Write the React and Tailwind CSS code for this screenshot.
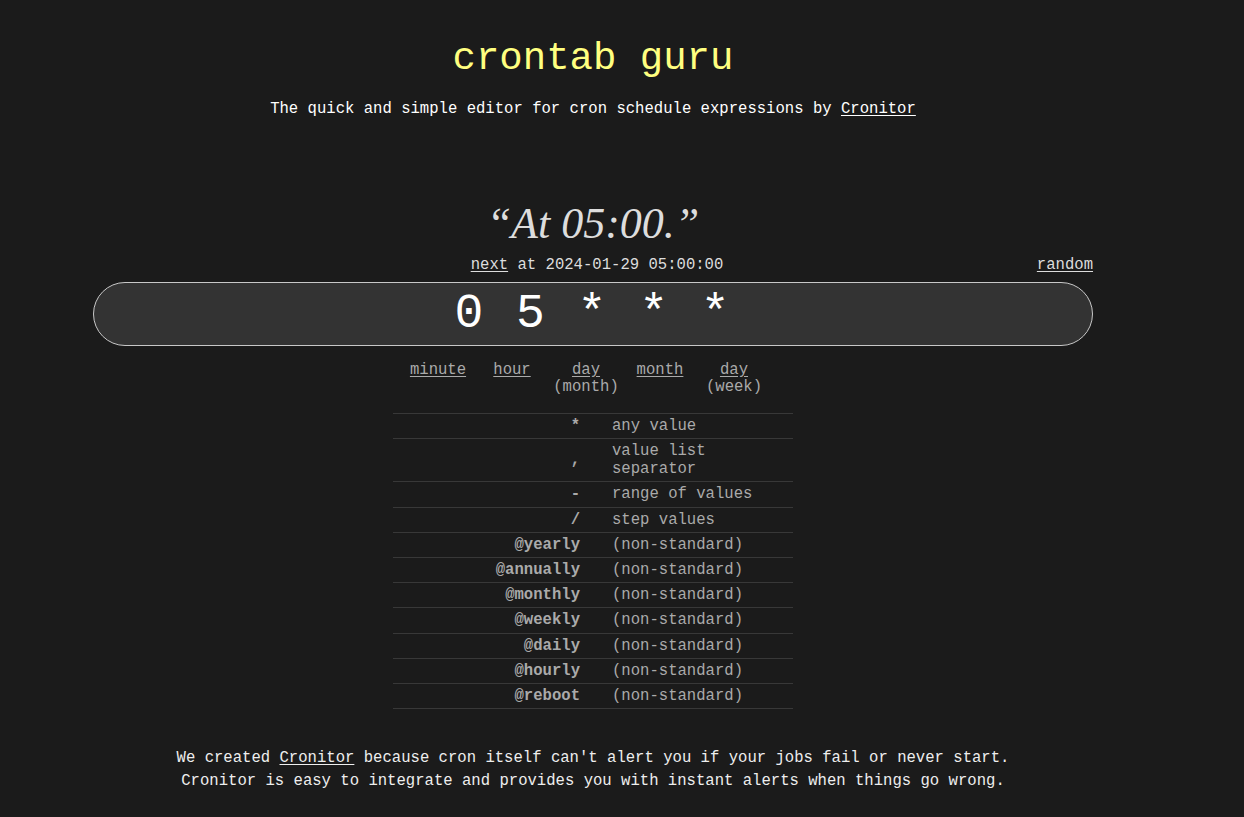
const rows = [
  { k: '*', v: 'any value' },
  { k: ',', v: <>value list<br />separator</> },
  { k: '-', v: 'range of values' },
  { k: '/', v: 'step values' },
  { k: '@yearly', v: '(non-standard)' },
  { k: '@annually', v: '(non-standard)' },
  { k: '@monthly', v: '(non-standard)' },
  { k: '@weekly', v: '(non-standard)' },
  { k: '@daily', v: '(non-standard)' },
  { k: '@hourly', v: '(non-standard)' },
  { k: '@reboot', v: '(non-standard)' },
]

const mono = "font-['Liberation_Mono','Courier_New',monospace]"

export default function App() {
  return (
    <div className={`min-h-[817px] bg-[#1b1b1b] ${mono} text-[15.6px]`}>
      <div className="w-[1000px] ml-[93px]">
        <h1 className="pt-[35px] text-center text-[39px] leading-[48px] text-[#ffff80]">crontab guru</h1>
        <p className="mt-[16px] text-center leading-[20px] text-white">
          The quick and simple editor for cron schedule expressions by <a className="underline underline-offset-2">Cronitor</a>
        </p>

        <div className="mt-[79px] text-center font-['Liberation_Serif',Georgia,serif] italic text-[44px] leading-[52px] text-[#dddddd]">
          “At 05:00.”
        </div>

        <div className="mt-[6px] flex items-baseline leading-[18px] text-[#dddddd]">
          <div className="flex-1" />
          <div className="pl-[8px]"><a className="underline underline-offset-2">next</a> at 2024-01-29 05:00:00</div>
          <div className="flex-1 flex justify-end">
            <a className="underline underline-offset-2">random</a>
          </div>
        </div>

        <div className="mt-[8px] h-[64px] rounded-full border border-[#c8c8c8] bg-[#333333] flex items-center justify-center">
          <span className="text-[48px] leading-[48px] tracking-[2px] text-white whitespace-pre">0 5 * * *</span>
        </div>

        <div className="mt-[16px] flex justify-center pr-[14px] leading-[17px] text-[#aaaaaa] text-center">
          <div className="w-[74px]"><a className="underline underline-offset-2">minute</a></div>
          <div className="w-[74px]"><a className="underline underline-offset-2">hour</a></div>
          <div className="w-[74px]"><a className="underline underline-offset-2">day</a><br />(month)</div>
          <div className="w-[74px]"><a className="underline underline-offset-2">month</a></div>
          <div className="w-[74px]"><a className="underline underline-offset-2">day</a><br />(week)</div>
        </div>

        <div className="mt-[17px] mx-auto w-[400px] border-t border-[#383838]">
          {rows.map((r, i) => (
            <div key={i} className="flex items-center border-b border-[#383838] py-[3.1px] leading-[18px] text-[#aaaaaa]">
              <div className="w-1/2 pr-[13px] text-right font-bold">{r.k}</div>
              <div className="w-1/2 pl-[19px]">{r.v}</div>
            </div>
          ))}
        </div>

        <div className="mt-[38px] text-center leading-[23px] text-[#eeeeee]">
          <p>We created <a className="underline underline-offset-2">Cronitor</a> because cron itself can't alert you if your jobs fail or never start.</p>
          <p>Cronitor is easy to integrate and provides you with instant alerts when things go wrong.</p>
        </div>
      </div>
    </div>
  )
}
